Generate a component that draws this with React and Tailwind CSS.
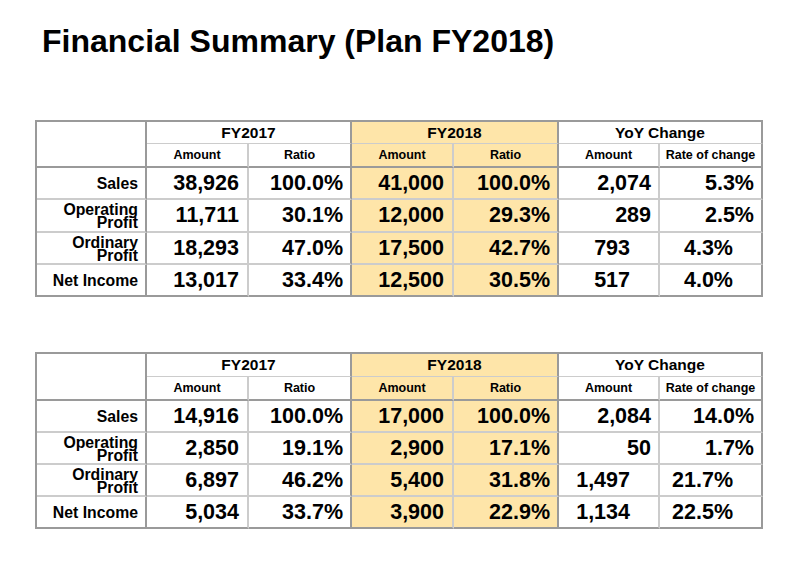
import React from "react";

// Two plan tables, same layout
const tables = [
  {
    rowsClass: "grid-rows-[22px_24px_32px_33px_32px_32px]",
    gap: "mt-[63px]",
    rows: [
      ["Sales", "38,926", "100.0%", "41,000", "100.0%", "2,074", "5.3%", false],
      ["Operating\nProfit", "11,711", "30.1%", "12,000", "29.3%", "289", "2.5%", false],
      ["Ordinary\nProfit", "18,293", "47.0%", "17,500", "42.7%", "793", "4.3%", true],
      ["Net Income", "13,017", "33.4%", "12,500", "30.5%", "517", "4.0%", true],
    ],
  },
  {
    rowsClass: "grid-rows-[23px_24px_32px_32px_32px_32px]",
    gap: "mt-[55px]",
    rows: [
      ["Sales", "14,916", "100.0%", "17,000", "100.0%", "2,084", "14.0%", false],
      ["Operating\nProfit", "2,850", "19.1%", "2,900", "17.1%", "50", "1.7%", false],
      ["Ordinary\nProfit", "6,897", "46.2%", "5,400", "31.8%", "1,497", "21.7%", true],
      ["Net Income", "5,034", "33.7%", "3,900", "22.9%", "1,134", "22.5%", true],
    ],
  },
];

const dark = "border-[#9a9a9a]";
const yellow = "bg-[#fee5a9]";

function Group({ title, fill }) {
  return (
    <div
      className={`col-span-2 flex items-center justify-center border-r-2 border-r-[#9a9a9a] border-b border-b-[#cccccc] text-[15.5px] ${fill ? yellow : ""}`}
    >
      {title}
    </div>
  );
}

function Sub({ text, fill, last }) {
  return (
    <div
      className={`flex items-center justify-center border-r-2 border-b-2 border-b-[#9a9a9a] text-[12.5px] ${
        last ? "border-r-[#9a9a9a]" : "border-r-[#cccccc]"
      } ${fill ? yellow : ""}`}
    >
      {text}
    </div>
  );
}

function SummaryTable({ data }) {
  return (
    <div
      className={`${data.gap} ml-[35px] grid w-[728px] grid-cols-[110px_102px_103px_102px_105px_101px_103px] ${data.rowsClass} border-l-2 border-t-2 ${dark} font-bold text-black`}
    >
      <div className="row-span-2 border-r-2 border-b-2 border-[#9a9a9a]" />
      <Group title="FY2017" />
      <Group title="FY2018" fill />
      <Group title="YoY Change" />

      <Sub text="Amount" />
      <Sub text="Ratio" last />
      <Sub text="Amount" fill />
      <Sub text="Ratio" fill last />
      <Sub text="Amount" />
      <Sub text="Rate of change" last />

      {data.rows.map((r, i) => {
        const lastRow = i === data.rows.length - 1;
        const bottom = lastRow ? "border-b-[#9a9a9a]" : "border-b-[#cccccc]";
        const cell = `flex items-center justify-end border-b-2 border-r-2 ${bottom} text-[21.5px]`;
        return (
          <React.Fragment key={i}>
            <div
              className={`flex items-center justify-end whitespace-pre-line border-b-2 border-r-2 border-r-[#9a9a9a] ${bottom} pr-[7px] pt-[1px] text-right text-[15.8px] leading-[13px]`}
            >
              {r[0]}
            </div>
            <div className={`${cell} border-r-[#cccccc] pr-[8px]`}>{r[1]}</div>
            <div className={`${cell} border-r-[#9a9a9a] pr-[7px]`}>{r[2]}</div>
            <div className={`${cell} ${yellow} border-r-[#cccccc] pr-[8px]`}>{r[3]}</div>
            <div className={`${cell} ${yellow} border-r-[#9a9a9a] pr-[7px]`}>{r[4]}</div>
            <div className={`${cell} border-r-[#cccccc] ${r[7] ? "pr-[28px]" : "pr-[7px]"}`}>{r[5]}</div>
            <div className={`${cell} border-r-[#9a9a9a] ${r[7] ? "pr-[28px]" : "pr-[7px]"}`}>{r[6]}</div>
          </React.Fragment>
        );
      })}
    </div>
  );
}

export default function App() {
  return (
    <div className="flex h-[565px] w-[800px] flex-col bg-white font-['Liberation_Sans',Arial,sans-serif]">
      {/* Title */}
      <h1 className="pl-[42px] pt-[25px] text-[32px] font-bold leading-[32px] text-black">
        Financial Summary (Plan FY2018)
      </h1>

      {tables.map((t, i) => (
        <SummaryTable key={i} data={t} />
      ))}
    </div>
  );
}
